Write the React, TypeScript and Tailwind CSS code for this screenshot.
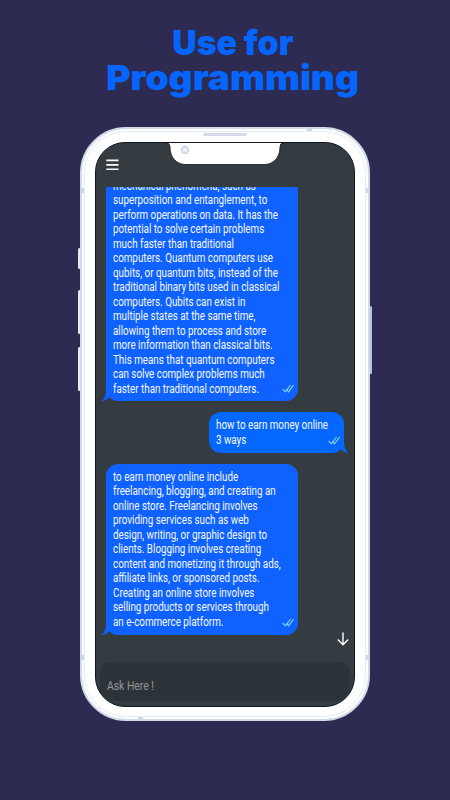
import clsx from "clsx";

interface BubbleProps {
  lines: string[];
  mine?: boolean;
  className?: string;
}

const QUANTUM = [
  "mechanical phenomena, such as",
  "superposition and entanglement, to",
  "perform operations on data. It has the",
  "potential to solve certain problems",
  "much faster than traditional",
  "computers. Quantum computers use",
  "qubits, or quantum bits, instead of the",
  "traditional binary bits used in classical",
  "computers. Qubits can exist in",
  "multiple states at the same time,",
  "allowing them to process and store",
  "more information than classical bits.",
  "This means that quantum computers",
  "can solve complex problems much",
  "faster than traditional computers.",
];

const QUESTION = ["how to earn money online", "3 ways"];

const EARNING = [
  "to earn money online include",
  "freelancing, blogging, and creating an",
  "online store. Freelancing involves",
  "providing services such as web",
  "design, writing, or graphic design to",
  "clients. Blogging involves creating",
  "content and monetizing it through ads,",
  "affiliate links, or sponsored posts.",
  "Creating an online store involves",
  "selling products or services through",
  "an e-commerce platform.",
];

const Ticks = () => (
  <svg
    viewBox="0 0 12 9"
    className="mb-2 h-[9px] w-3 shrink-0"
    fill="none"
    stroke="#7fd0ee"
    strokeWidth="1.2"
  >
    <path d="M.6 4.8 3.3 7.8 8.6 1" />
    <path d="m4.5 5.2 2 2.6L11.6 1" />
  </svg>
);

const Bubble = ({ lines, mine, className }: BubbleProps) => (
  <div
    className={clsx(
      "relative flex shrink-0 items-end rounded-xl pr-1 pl-[7px] text-[12.5px] leading-[14.5px] text-[#f6f9ff]",
      mine ? "bg-[#0468ff]" : "bg-[#0f62ff]",
      className
    )}
  >
    <div className="min-w-0 flex-1 self-start">
      {lines.map((line) => (
        <p key={line} className="w-max origin-left scale-x-[0.786] whitespace-nowrap">
          {line}
        </p>
      ))}
    </div>
    <Ticks />
    <svg
      viewBox="0 0 10 12"
      className={clsx(
        "absolute bottom-0 h-3 w-2.5",
        mine ? "-right-[5px] -scale-x-100 text-[#0468ff]" : "-left-[5px] text-[#0f62ff]"
      )}
    >
      <path d="M5 0C5 6 3.5 10 .3 12 3.5 12 6 10.8 8 8.5L10 0Z" fill="currentColor" />
    </svg>
  </div>
);

// Outer shell: side buttons, antenna bands, bezel highlight and earpiece
const Shell = () => (
  <svg viewBox="0 0 296 594" className="absolute inset-y-0 -left-[3px] h-[594px] w-[296px]">
    <g fill="#e5e9f4">
      <rect x="1" y="121" width="4" height="21" rx="1.5" />
      <rect x="1" y="163" width="4" height="44" rx="1.5" />
      <rect x="1" y="220" width="4" height="44" rx="1.5" />
    </g>
    <rect x="291" y="179" width="4" height="68" rx="1.5" fill="#b7c4dd" />
    <rect x="4" y="1" width="288" height="592" rx="45" fill="#fff" stroke="#d2dae9" strokeWidth="2" />
    <rect x="7.5" y="4.5" width="281" height="585" rx="41.5" fill="none" stroke="#e6eaf4" />
    <g fill="#ced7e7">
      <rect x="230" y="0" width="5" height="4" />
      <rect x="61" y="590" width="5" height="4" />
      <rect x="3" y="61" width="4" height="5" />
      <rect x="289" y="61" width="4" height="5" />
      <rect x="3" y="528" width="4" height="5" />
      <rect x="289" y="528" width="4" height="5" />
    </g>
    <rect x="126" y="6" width="44" height="3" rx="1.5" fill="#d5dce8" />
  </svg>
);

const Notch = () => (
  <svg viewBox="0 0 120 23" className="h-[23px] w-[120px] shrink-0">
    <path
      d="M0 0V1H2Q5 1.2 5 5C5 15 11 22.5 21 22.5H99C109 22.5 115 15 115 5Q115 1.2 118 1H120V0Z"
      fill="#fff"
    />
    <path
      d="M0 1H2Q5 1.2 5 5C5 15 11 22.5 21 22.5H99C109 22.5 115 15 115 5Q115 1.2 118 1H120"
      fill="none"
      stroke="#141a23"
      strokeWidth=".8"
    />
    <circle cx="20" cy="8" r="3.4" fill="#eef2f8" stroke="#bdc9dc" strokeWidth="1.1" />
    <circle cx="20" cy="8" r="1.5" fill="#fff" stroke="#d3dbe8" strokeWidth=".6" />
  </svg>
);

const Screen = () => (
  <div className="relative flex h-[565px] w-[260px] flex-col overflow-hidden rounded-[30px] border border-[#11171f] bg-[#343b41]">
    <header className="flex h-11 shrink-0 items-start gap-[46px] pl-2.5">
      <svg
        viewBox="0 0 13 11"
        className="mt-4 h-[11px] w-[13px] shrink-0"
        stroke="#fff"
        strokeWidth="1.6"
      >
        <path d="M.3 1.4h12.2M.3 5.9h12.2M.3 10.2h12.2" />
      </svg>
      <div className="-mt-px">
        <Notch />
      </div>
    </header>

    <div className="flex h-[449px] shrink-0 flex-col items-start gap-[11px] overflow-hidden px-2.5">
      <Bubble lines={QUANTUM} className="-mt-[15px] w-48 pt-[6.5px] pb-[5px] [&>svg:nth-child(2)]:mb-[3px]" />
      <Bubble mine lines={QUESTION} className="h-[41px] w-[135px] self-end pt-1.5" />
      <Bubble lines={EARNING} className="h-[171px] w-48 pt-[5.5px]" />
    </div>

    <div className="flex h-[26px] shrink-0 items-start justify-end pr-[5.5px]">
      <svg
        viewBox="0 0 12 14"
        className="-mt-1 h-3.5 w-3"
        fill="none"
        stroke="#fff"
        strokeWidth="1.4"
      >
        <path d="M6 .5v12.3M.8 7.6 6 12.8l5.2-5.2" />
      </svg>
    </div>

    <div className="mx-1 flex h-[39px] shrink-0 items-center rounded-[9px] bg-[#2d3439] pt-[9px] pl-[7px]">
      <span className="origin-left scale-x-[0.83] text-[12.5px] text-[#929699]">Ask Here !</span>
    </div>
  </div>
);

const Phone = () => (
  <div className="relative h-[594px] w-[290px] p-[15px]">
    <Shell />
    <Screen />
  </div>
);

export default function App() {
  return (
    <main className="flex h-[800px] w-[450px] flex-col items-center overflow-hidden bg-[#2d2b52] pt-[25px] font-['Roboto','Liberation_Sans',sans-serif]">
      <h1 className="flex h-[102px] w-full shrink-0 flex-col items-center pl-[15px] font-['Inter','Open_Sans',sans-serif] text-[34.5px] leading-[35px] font-black text-[#0566ff]">
        <span className="scale-x-[0.98]">Use for</span>
        <span className="scale-x-[1.075]">Programming</span>
      </h1>
      <Phone />
    </main>
  );
}
